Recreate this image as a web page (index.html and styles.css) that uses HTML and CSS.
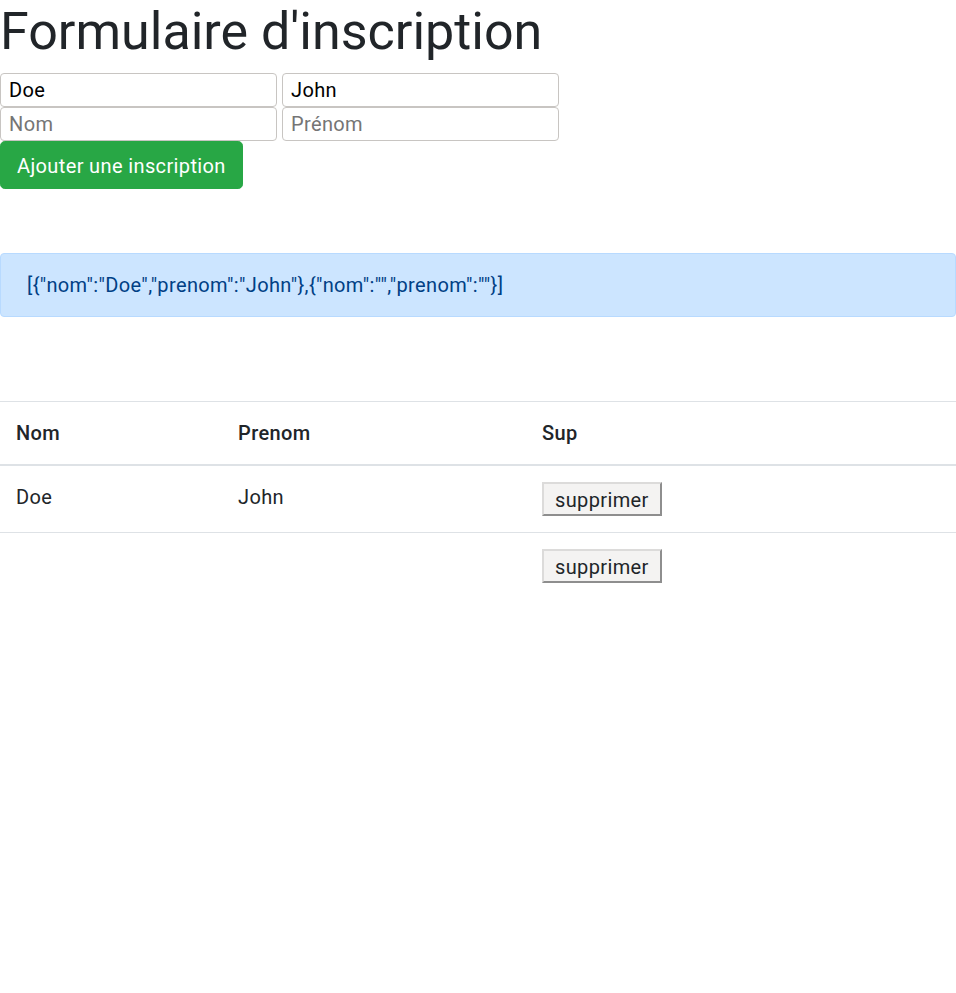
FILE: index.html
```html
<!DOCTYPE html>
<html lang="fr">
<head>
<meta charset="utf-8">
<title>Formulaire d'inscription</title>
<link rel="stylesheet" href="styles.css">
</head>
<body>
<h1 class="title">Formulaire d'inscription</h1>
<form class="form">
  <div class="row">
    <input class="field" type="text" value="Doe">
    <input class="field" type="text" value="John">
  </div>
  <div class="row">
    <input class="field" type="text" placeholder="Nom">
    <input class="field" type="text" placeholder="Prénom">
  </div>
  <button class="btn-add" type="button">Ajouter une inscription</button>
</form>
<div class="alert">[{"nom":"Doe","prenom":"John"},{"nom":"","prenom":""}]</div>
<table class="table">
  <thead>
    <tr><th class="c1">Nom</th><th class="c2">Prenom</th><th>Sup</th></tr>
  </thead>
  <tbody>
    <tr><td>Doe</td><td>John</td><td><button class="btn-del" type="button">supprimer</button></td></tr>
    <tr><td></td><td></td><td><button class="btn-del" type="button">supprimer</button></td></tr>
  </tbody>
</table>
</body>
</html>
```
FILE: styles.css
```css
html, body {
  margin: 0;
  padding: 0;
  background: #fff;
}
body {
  font-family: Roboto, "Liberation Sans", sans-serif;
  font-size: 20px;
  line-height: 1.5;
  letter-spacing: 0.37px;
  color: #212529;
}
.title {
  margin: 0 0 10px 0;
  font-size: 52px;
  font-weight: 400;
  line-height: 63px;
  letter-spacing: 0;
  color: #212529;
}
.form {
  display: flex;
  flex-direction: column;
  align-items: flex-start;
  gap: 0;
}
.row {
  display: flex;
  gap: 5px;
}
.field {
  box-sizing: border-box;
  width: 277px;
  height: 34px;
  margin: 0;
  padding: 0 8px;
  font-family: Roboto, "Liberation Sans", sans-serif;
  font-size: 20px;
  letter-spacing: 0.37px;
  color: #000;
  border: 1px solid #c8c5c2;
  border-radius: 4px;
  background: #fff;
}
.field::placeholder {
  color: #757575;
}
.btn-add {
  box-sizing: border-box;
  height: 48px;
  padding: 2px 16px 0 16px;
  font-family: Roboto, "Liberation Sans", sans-serif;
  font-size: 20px;
  line-height: 30px;
  letter-spacing: 0.37px;
  color: #fff;
  background: #28a745;
  border: 1px solid #28a745;
  border-radius: 4.8px;
}
.alert {
  margin-top: 64px;
  padding: 16px 26px;
  font-size: 20px;
  line-height: 30px;
  color: #004085;
  background: #cce5ff;
  border: 1px solid #b8daff;
  border-radius: 4px;
}
.table {
  width: 100%;
  margin-top: 84px;
  border-collapse: collapse;
}
.table th,
.table td {
  padding: 16px;
  text-align: left;
  vertical-align: top;
  border-top: 1px solid #dee2e6;
  line-height: 30px;
}
.table th {
  font-weight: 500;
  vertical-align: bottom;
  border-bottom: 2px solid #dee2e6;
}
.c1 { width: 190px; }
.c2 { width: 272px; }
.btn-del {
  box-sizing: border-box;
  display: block;
  height: 34px;
  margin: 0;
  padding: 2px 11px 0 11px;
  font-family: Roboto, "Liberation Sans", sans-serif;
  font-size: 20px;
  line-height: 28px;
  letter-spacing: 0.37px;
  color: #212529;
  background: #f4f3f2;
  border: 2px solid;
  border-color: #dcdbda #8e8e8e #8e8e8e #dcdbda;
  border-radius: 0;
}
```
